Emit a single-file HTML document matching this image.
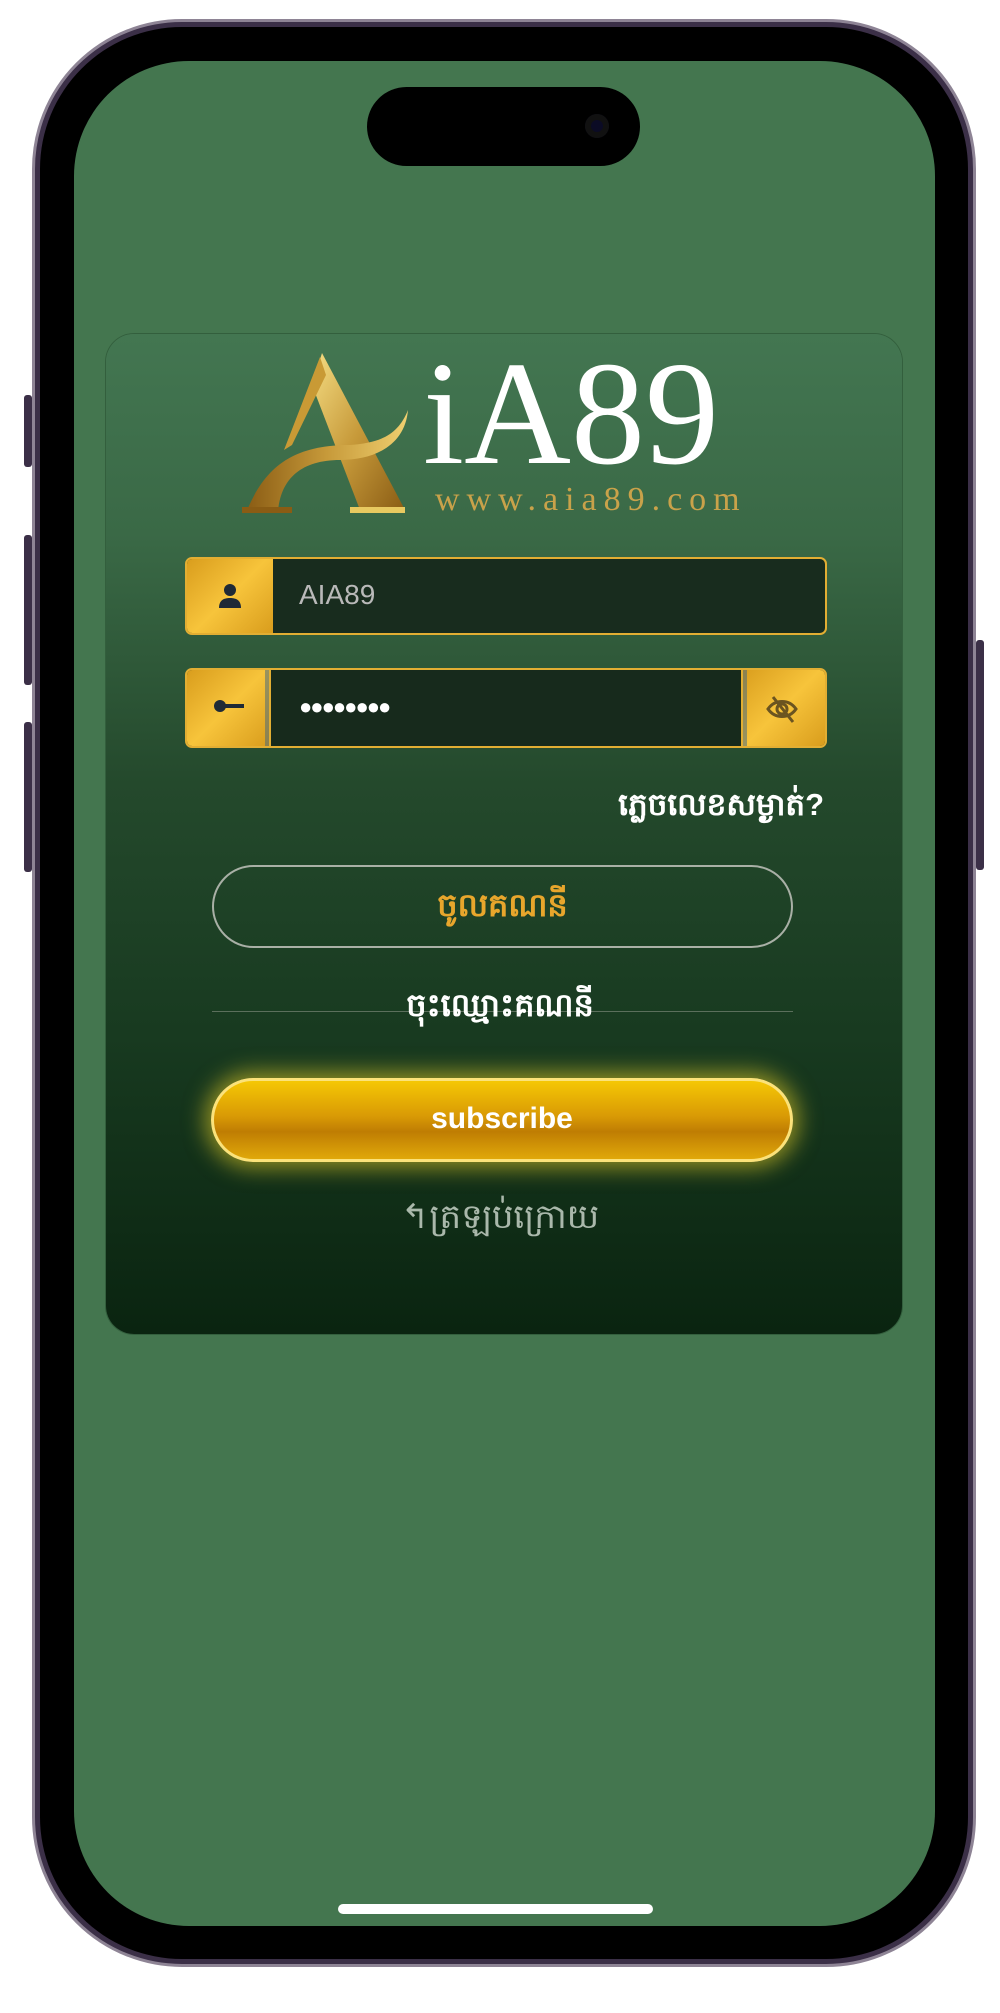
<!DOCTYPE html>
<html><head><meta charset="utf-8"><style>
*{margin:0;padding:0;box-sizing:border-box}
body{width:1000px;height:2013px;background:#fff;position:relative;overflow:hidden;font-family:"Liberation Sans","DejaVu Sans",sans-serif}
.frame{position:absolute;left:32px;top:19px;width:944px;height:1948px;border-radius:150px;background:#3b2f47;border:3px solid #8e8495}
.bezel{position:absolute;left:40px;top:27px;width:928px;height:1932px;border-radius:142px;background:#000}
.screen{position:absolute;left:74px;top:61px;width:861px;height:1865px;border-radius:115px;background:#44764f;overflow:hidden}
.btn{position:absolute;background:#3b2f47;border-radius:3px}
.island{position:absolute;left:367px;top:87px;width:273px;height:79px;border-radius:40px;background:#000}
.cam{position:absolute;left:585px;top:114px;width:24px;height:24px;border-radius:50%;background:#0b0b25;box-shadow:inset 0 0 0 6px #111}
.card{position:absolute;left:106px;top:334px;width:796px;height:1000px;border-radius:28px;background:linear-gradient(#437651 0%,#3a6946 20%,#24492c 45%,#183a20 70%,#0a2410 100%);box-shadow:0 0 0 1px rgba(40,80,50,.6)}
.inp{position:absolute;left:185px;width:642px;height:78px;border:2px solid #e2ae33;border-radius:7px;background:#182c1e;overflow:hidden}
.ic{position:absolute;top:0;bottom:0;width:86px;background:linear-gradient(135deg,#d99d1d,#f7c43b 50%,#d99d1d)}
.kh{color:#fff;font-family:"Liberation Sans","Noto Sans CJK SC",sans-serif}
</style></head><body>
<div class="frame"></div>
<div class="btn" style="left:24px;top:395px;width:8px;height:72px"></div>
<div class="btn" style="left:24px;top:535px;width:8px;height:150px"></div>
<div class="btn" style="left:24px;top:722px;width:8px;height:150px"></div>
<div class="btn" style="left:976px;top:640px;width:8px;height:230px"></div>
<div class="bezel"></div>
<div class="screen"></div>
<div class="island"></div>
<div class="cam"></div>
<div class="card"></div>

<svg style="position:absolute;left:240px;top:345px" width="540" height="175" viewBox="0 0 540 175">
<defs><linearGradient id="g" x1="0" y1="0" x2="1" y2="1"><stop offset="0" stop-color="#f5dd83"/><stop offset=".5" stop-color="#c79a3a"/><stop offset="1" stop-color="#8a5c14"/></linearGradient>
<linearGradient id="g2" x1="0" y1="0" x2="1" y2="0"><stop offset="0" stop-color="#8a5c14"/><stop offset=".5" stop-color="#c79a3a"/><stop offset="1" stop-color="#f0d070"/></linearGradient></defs>
<path d="M82 8 L165 165 L120 165 L72 40 Z" fill="url(#g)"/>
<path d="M80 12 L44 105 L52 100 L86 30 Z" fill="#c99a35"/>
<path d="M6 168 C25 120 55 100 110 100 C140 98 158 90 168 65 C165 100 135 115 100 115 C60 115 40 135 38 168 Z" fill="url(#g2)"/>
<rect x="2" y="162" width="50" height="6" fill="#8a5c14"/>
<rect x="110" y="162" width="55" height="6" fill="#e8c960"/>
<text x="183" y="118" font-family="Liberation Serif,serif" font-size="148" fill="#fff">iA89</text>
<text x="195" y="165" font-family="Liberation Serif,serif" font-size="34" letter-spacing="7" fill="#c9a24a">www.aia89.com</text>
</svg>

<div class="inp" style="top:557px">
 <div class="ic" style="left:0"></div>
 <svg style="position:absolute;left:30px;top:24px" width="26" height="26" viewBox="0 0 26 26"><circle cx="13" cy="7" r="6" fill="#1f2a36"/><path d="M2 25 C2 17 7 15 13 15 C19 15 24 17 24 25 Z" fill="#1f2a36"/></svg>
 <div style="position:absolute;left:112px;top:20px;font-size:28px;color:#b9b9b9">AIA89</div>
</div>
<div class="inp" style="top:668px;height:80px">
 <div class="ic" style="left:0;width:82px"></div>
 <div class="ic" style="right:0;width:85px"></div>
 <div style="position:absolute;left:82px;top:-2px;width:474px;height:80px;background:#172a1c;border:2px solid #e2ae33;box-shadow:0 0 0 4px rgba(60,100,130,.5)"></div>
 <svg style="position:absolute;left:26px;top:28px" width="32" height="16" viewBox="0 0 32 16"><circle cx="7" cy="8" r="6" fill="#1f2a36"/><rect x="10" y="6" width="21" height="4" fill="#1f2a36"/></svg>
 <div style="position:absolute;left:112px;top:24px;font-size:22px;color:#fff;letter-spacing:-2px">●●●●●●●●</div>
 <svg style="position:absolute;right:26px;top:24px" width="34" height="30" viewBox="0 0 34 30" fill="none" stroke="#6b5420" stroke-width="3"><path d="M3 15 C10 5 24 5 31 15 C24 25 10 25 3 15 Z"/><circle cx="17" cy="15" r="5"/><path d="M8 3 L28 28"/></svg>
</div>

<div class="kh" style="position:absolute;right:176px;top:786px;font-size:31px;font-weight:bold">ភ្លេចលេខសម្ងាត់?</div>

<div style="position:absolute;left:212px;top:865px;width:581px;height:83px;border:2px solid #a9b0a6;border-radius:42px;text-align:center;line-height:76px;font-size:32px;color:#e8a62c;font-weight:bold;font-family:'Liberation Sans','Noto Sans CJK SC',sans-serif">ចូលគណនី</div>

<div style="position:absolute;left:212px;top:1011px;width:581px;height:1px;background:#5b6f5c"></div>
<div class="kh" style="position:absolute;left:0;width:1000px;top:985px;text-align:center;font-size:32px;font-weight:bold">ចុះឈ្មោះគណនី</div>

<div style="position:absolute;left:211px;top:1078px;width:582px;height:84px;border-radius:42px;border:3px solid #fbe27a;background:linear-gradient(#f5c705 0%,#d99a05 45%,#bf7d03 65%,#e0a80a 100%);box-shadow:0 0 22px 6px rgba(250,220,40,.55);text-align:center;line-height:76px;color:#fff;font-size:30px;font-weight:bold">subscribe</div>

<div style="position:absolute;left:0;width:1000px;top:1195px;text-align:center;font-size:34px;color:#aab8ab;font-family:'Liberation Sans','Noto Sans CJK SC',sans-serif">↰ត្រឡប់ក្រោយ</div>

<div style="position:absolute;left:338px;top:1904px;width:315px;height:10px;border-radius:5px;background:#fff"></div>
</body></html>
